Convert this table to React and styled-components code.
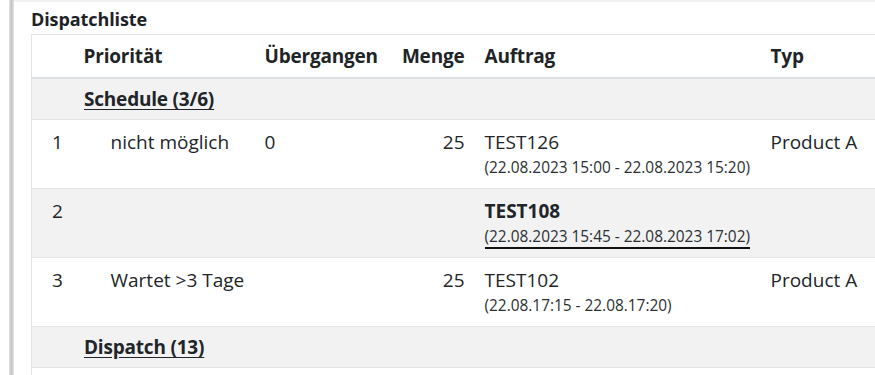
import React from "react";
import styled, { createGlobalStyle } from "styled-components";

const Global = createGlobalStyle`
  html, body { margin: 0; padding: 0; background: #fff; }
  body { font-family: "Open Sans", "Noto Sans", sans-serif; color: #212529; }
  #root { width: 875px; height: 375px; overflow: hidden; }
`;

const Page = styled.div`
  display: flex;
  height: 375px;
  overflow: hidden;
`;

const Rail = styled.div`
  flex: 0 0 5px;
  margin-left: 9px;
  background: linear-gradient(to right, #e6e6e6, #c2c2c2 45%, #cfcfcf 70%, #e8e8e8);
`;

const Content = styled.main`
  flex: 1;
  min-width: 0;
  padding: 6px 0 0 17px;
  border-top: 2px solid #f1f1f1;
  overflow: hidden;
`;

const Title = styled.h2`
  margin: 0 0 4px;
  font-size: 18px;
  line-height: 22px;
  font-weight: 700;
  letter-spacing: -0.1px;
  color: #1d2226;
`;

const Table = styled.table`
  width: 900px;
  border-collapse: collapse;
  border: 1px solid #e2e5e8;
  font-size: 19px;
  table-layout: fixed;
`;

const Th = styled.th`
  text-align: ${(p) => p.$align || "left"};
  font-weight: 700;
  padding: 9px ${(p) => (p.$align === "right" ? "10px" : "0")} 9px ${(p) => p.$pl || 8}px;
  line-height: 24px;
  border-bottom: 2px solid #dfe2e5;
  color: #202427;
  white-space: nowrap;
  letter-spacing: -0.2px;
`;

const Row = styled.tr`
  background: ${(p) => (p.$shade ? "#f2f2f2" : "#fff")};
  border-bottom: 1px solid #e2e5e8;
`;

const Td = styled.td`
  vertical-align: top;
  text-align: ${(p) => p.$align || "left"};
  padding: 10px ${(p) => (p.$align === "right" ? "10px" : "0")} 8px ${(p) => p.$pl ?? 8}px;
  line-height: 24px;
  white-space: nowrap;
`;

const GroupCell = styled.td`
  padding: 8px 0 8px 52px;
  line-height: 24px;
  font-weight: 700;
  letter-spacing: -0.2px;
  text-decoration: underline;
  text-underline-offset: 3px;
`;

const Order = styled.div`
  font-weight: ${(p) => (p.$bold ? 700 : 400)};
`;

const Range = styled.span`
  display: inline-block;
  font-size: 15.4px;
  line-height: 20px;
  margin-top: 2px;
  color: #2b2f33;
  border-bottom: 2.5px solid ${(p) => (p.$active ? "#111" : "transparent")};
`;

const rows = [
  { n: 1, prio: "nicht möglich", skip: "0", qty: "25", order: "TEST126", range: "(22.08.2023 15:00 - 22.08.2023 15:20)", typ: "Product A" },
  { n: 2, prio: "", skip: "", qty: "", order: "TEST108", range: "(22.08.2023 15:45 - 22.08.2023 17:02)", typ: "", active: true },
  { n: 3, prio: "Wartet >3 Tage", skip: "", qty: "25", order: "TEST102", range: "(22.08.17:15 - 22.08.17:20)", typ: "Product A" },
];

export default function App() {
  return (
    <Page>
      <Global />
      <Rail />
      <Content>
        <Title>Dispatchliste</Title>
        <Table>
          <colgroup>
            <col style={{ width: 44 }} />
            <col style={{ width: 180 }} />
            <col style={{ width: 135 }} />
            <col style={{ width: 84 }} />
            <col style={{ width: 287 }} />
            <col style={{ width: 170 }} />
          </colgroup>
          <thead>
            <tr>
              <Th />
              <Th>Priorität</Th>
              <Th $pl={9}>Übergangen</Th>
              <Th $align="right">Menge</Th>
              <Th $pl={10}>Auftrag</Th>
              <Th $pl={9}>Typ</Th>
            </tr>
          </thead>
          <tbody>
            <Row $shade>
              <GroupCell colSpan={6}>Schedule (3/6)</GroupCell>
            </Row>
            {rows.map((r) => (
              <Row key={r.n} $shade={r.active}>
                <Td $pl={20}>{r.n}</Td>
                <Td $pl={35}>{r.prio}</Td>
                <Td $pl={9}>{r.skip}</Td>
                <Td $align="right">{r.qty}</Td>
                <Td $pl={10}>
                  <Order $bold={r.active}>{r.order}</Order>
                  <Range $active={r.active}>{r.range}</Range>
                </Td>
                <Td $pl={9}>{r.typ}</Td>
              </Row>
            ))}
            <Row $shade>
              <GroupCell colSpan={6}>Dispatch (13)</GroupCell>
            </Row>
            <Row>
              <Td $pl={20}>&nbsp;</Td>
              <Td />
              <Td />
              <Td />
              <Td />
              <Td />
            </Row>
          </tbody>
        </Table>
      </Content>
    </Page>
  );
}
